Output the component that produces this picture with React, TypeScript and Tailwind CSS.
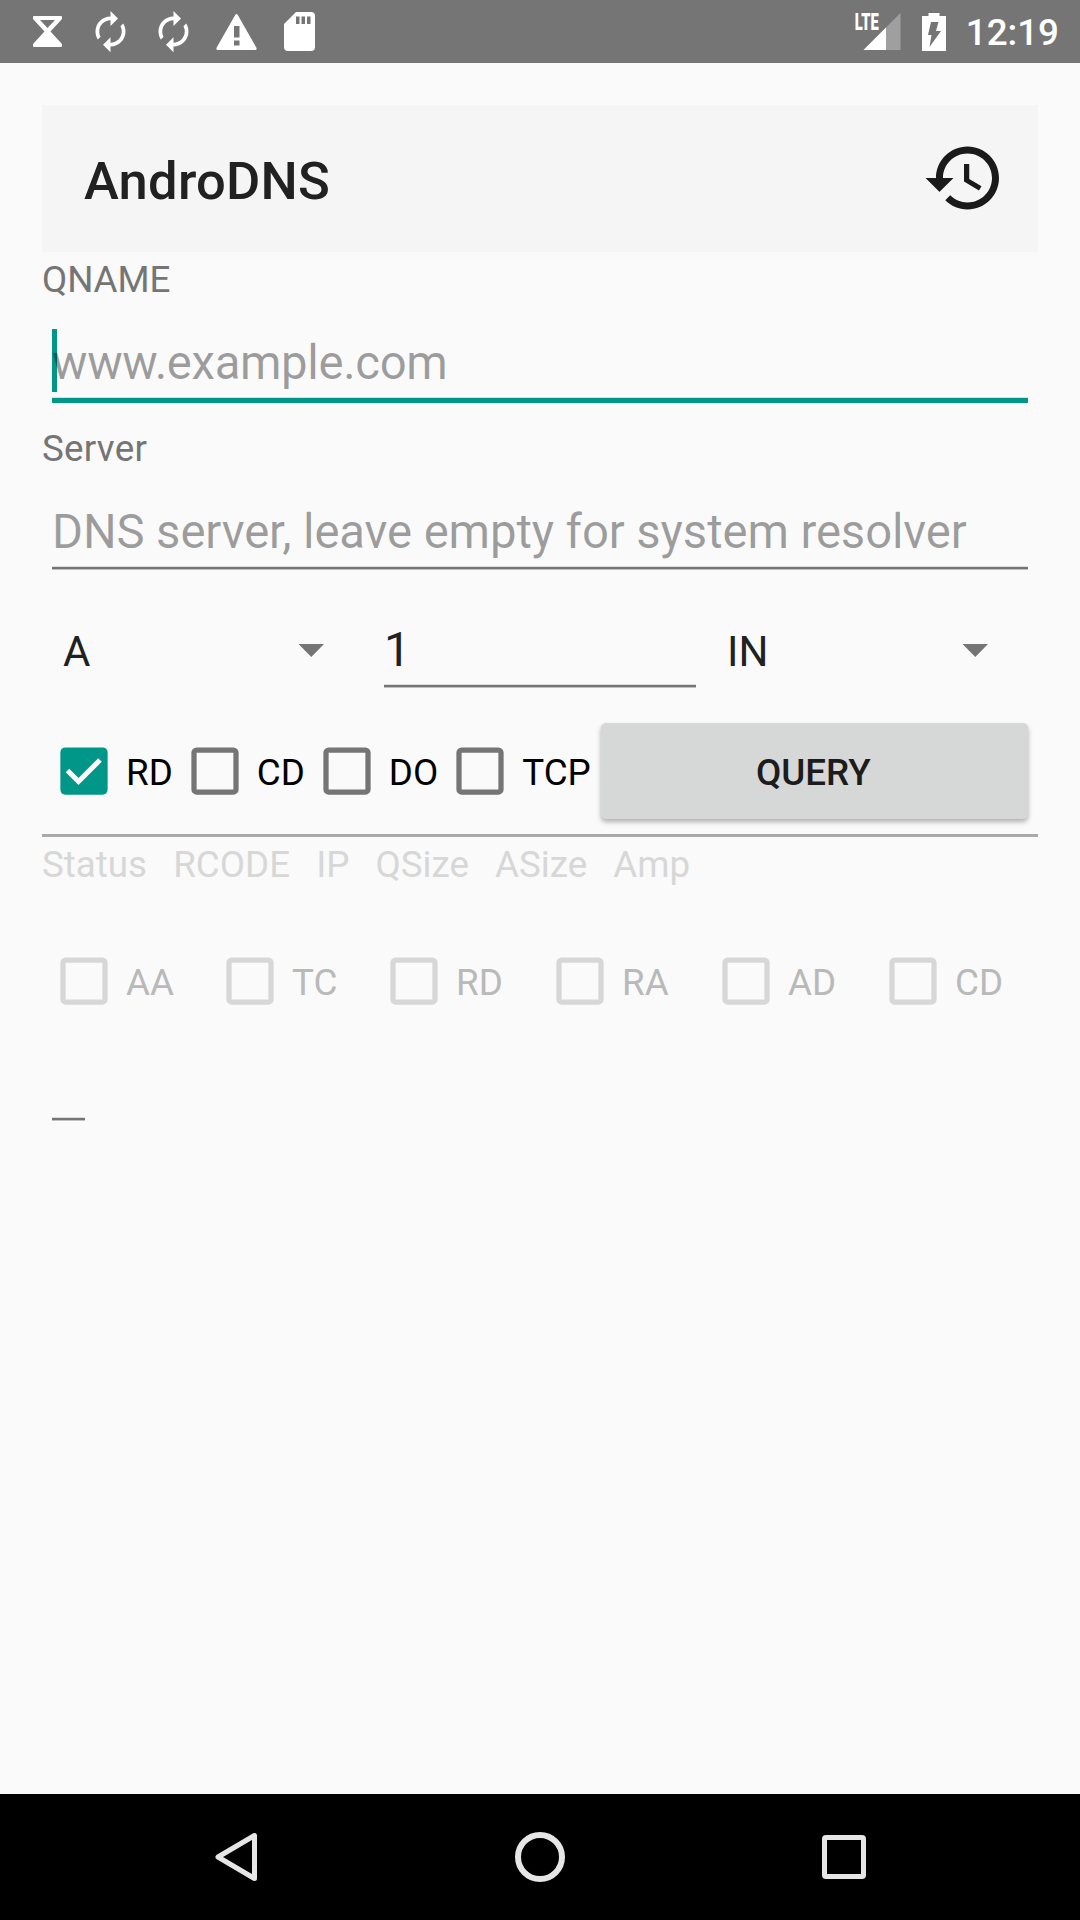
import React from "react";

const AUTORENEW =
  "M12 6v3l4-4-4-4v3c-4.420 0-8 3.580-8 8 0 1.570.46 3.030 1.240 4.260L6.700 14.800c-.45-.83-.7-1.790-.7-2.800 0-3.310 2.690-6 6-6zm6.760 1.740L17.300 9.200c.44.84.7 1.790.7 2.800 0 3.310-2.690 6-6 6v-3l-4 4 4 4v-3c4.420 0 8-3.580 8-8 0-1.570-.46-3.030-1.240-4.260z";

function Slot({ children }: { children: React.ReactNode }) {
  return <div className="flex h-[63px] w-[63px] items-center justify-center">{children}</div>;
}

function StatusBar() {
  return (
    <header className="flex h-[63px] items-center justify-between bg-[#757575] text-white">
      <div className="flex pl-4">
        <Slot>
          <svg className="h-[31px] w-[29px]" viewBox="0 0 29 31" fill="currentColor">
            <path
              fillRule="evenodd"
              d="M1 0h27q1 0 1 1v2L17.500 15.500 29 28v2q0 1-1 1H1q-1 0-1-1v-2l11.500-12.500L0 3V1q0-1 1-1zM7 4l7.500 8L22 4z"
            />
          </svg>
        </Slot>
        {[0, 1].map((i) => (
          <Slot key={i}>
            <svg className="h-[45px] w-[45px]" viewBox="0 0 24 24" fill="currentColor">
              <path d={AUTORENEW} />
            </svg>
          </Slot>
        ))}
        <Slot>
          <svg className="h-[36px] w-[41px]" viewBox="0 0 41 36" fill="currentColor">
            <path
              fillRule="evenodd"
              d="M19.200 1q1.300-2 2.600 0L40.300 33.500q1 2.500-1 2.500H1.700q-2 0-1-2.500zM18 12v11.500h5.500V12zM18 26.500v5h5.500v-5z"
            />
          </svg>
        </Slot>
        <Slot>
          <svg className="h-[39px] w-[31px]" viewBox="0 0 31 39" fill="currentColor">
            <path
              fillRule="evenodd"
              d="M12 0h15q4 0 4 4v31q0 4-4 4H4q-4 0-4-4V12zM12 4.500v7.500h3.500V4.500zM17.500 4.500v7.500H21V4.500zM23 4.500v7.500h3.500V4.500z"
            />
          </svg>
        </Slot>
      </div>
      <div className="flex items-center pr-[21px]">
        <svg className="mr-[21px] h-[45px] w-[47px] overflow-visible" viewBox="0 -3 47 45" fill="#fff">
          <path d="M46.500 1v37H9.500z" fill="#9f9f9f" />
          <path d="M32 15.500V38H9.500z" />
          <text
            x="0.7"
            y="17.500"
            fontFamily="Roboto"
            fontWeight="900"
            fontSize="23"
            textLength="24"
            lengthAdjust="spacingAndGlyphs"
          >
            LTE
          </text>
        </svg>
        <svg className="mr-5 h-[38px] w-[24px]" viewBox="0 0 24 38" fill="#fff">
          <path d="M6.500 0h11v3H24v35H0V3h6.500z" />
          <path d="M9 9h7.500l-2.500 9h5L7.500 34l2-12H6z" fill="#757575" />
        </svg>
        <span className="pt-[2px] text-[36.75px] font-medium leading-[55px]">12:19</span>
      </div>
    </header>
  );
}

function Underline() {
  return <div className="mt-[5px] h-1 border-y border-t-[#dcdcdc] border-b-[#c0c0c0] bg-[#757575]" />;
}

function Field({ label, hint, focused }: { label: string; hint: string; focused?: boolean }) {
  return (
    <div>
      <div
        className={
          focused
            ? "h-[55px] text-[36.75px] leading-[55px] tracking-[-0.1px] text-[#757575]"
            : "h-[55px] text-[36.75px] leading-[55px] tracking-[0.25px] text-[#757575]"
        }
      >
        {label}
      </div>
      <div className="relative mx-[10px] pt-[27px]">
        {focused && <div className="absolute left-0 top-[22px] h-[63px] w-[5px] bg-[#009688]" />}
        <div
          className={
            focused
              ? "relative h-[58px] whitespace-nowrap text-[47.25px] leading-[58px] tracking-[-0.33px] text-black/38"
              : "relative h-[58px] whitespace-nowrap text-[47.25px] leading-[58px] tracking-[-0.1px] text-black/38"
          }
        >
          {hint}
        </div>
        {focused ? (
          <div className="mt-[5px] h-[6px] border-t border-[#c9e6e3] bg-[#009688]" />
        ) : (
          <Underline />
        )}
      </div>
    </div>
  );
}

function Spinner({ value }: { value: string }) {
  return (
    <div className="flex h-[59px] items-center justify-between pl-[21px] pr-[49.700px]">
      <span className="pt-[3px] text-[42px] leading-[58px] text-[#212121]">{value}</span>
      <svg className="h-[13px] w-[26px]" viewBox="0 0 26 13">
        <path d="M0.500 0h25.500L13.300 13z" fill="#757575" />
      </svg>
    </div>
  );
}

function Check({ label, checked, disabled }: { label: string; checked?: boolean; disabled?: boolean }) {
  return (
    <div className="flex h-12 items-center">
      <div className="flex w-[84px] justify-center">
        <svg className="h-12 w-12" viewBox="0 0 48 48" fill="none">
          {checked ? (
            <>
              <rect x="0.375" y="0.375" width="47.250" height="47.250" rx="5" fill="#009688" />
              <path d="M7.500 23.500l11 11L40 13" stroke="#fafafa" strokeWidth="5" />
            </>
          ) : (
            <rect
              x="3"
              y="3"
              width="42"
              height="42"
              rx="2.600"
              stroke={disabled ? "#d7d7d7" : "#757575"}
              strokeWidth="5.250"
            />
          )}
        </svg>
      </div>
      <span
        className={
          disabled
            ? "pt-1 text-[36.75px] leading-[54px] text-[#b9b9b9]"
            : "pt-1 text-[36.75px] leading-[54px] text-black"
        }
      >
        {label}
      </span>
    </div>
  );
}

export default function App() {
  return (
    <div className="flex h-[1920px] w-[1080px] flex-col overflow-hidden bg-[#fafafa] font-[Roboto,sans-serif]">
      <StatusBar />
      <main className="flex flex-1 flex-col px-[42px] pt-[42px]">
        <div className="flex h-[147px] items-center justify-between bg-[#f5f5f5] pl-[42px] pr-8">
          <h1 className="pt-1 text-[52.5px] font-medium leading-[62px] tracking-[0.25px] text-[#212121]">AndroDNS</h1>
          <svg className="mb-[2px] h-[84px] w-[84px]" viewBox="0 0 24 24" fill="#1a1a1a">
            <path d="M13 3c-4.970 0-9 4.030-9 9H1l3.890 3.890.07.14L9 12H6c0-3.870 3.130-7 7-7s7 3.130 7 7-3.130 7-7 7c-1.930 0-3.680-.79-4.940-2.060l-1.420 1.420C8.270 19.990 10.510 21 13 21c4.970 0 9-4.030 9-9s-4.030-9-9-9zm-1 5v5l4.280 2.540.72-1.210-3.500-2.080V8H12z" />
          </svg>
        </div>

        <Field label="QNAME" hint="www.example.com" focused />
        <div className="h-[18px]" />
        <Field label="Server" hint="DNS server, leave empty for system resolver" />

        <div className="mt-[51px] grid grid-cols-3">
          <Spinner value="A" />
          <div className="px-[10px]">
            <div className="h-[58px] text-[47.25px] leading-[58px] text-[#212121]">1</div>
            <Underline />
          </div>
          <Spinner value="IN" />
        </div>

        <div className="mt-[35px] flex h-24 items-center">
          <Check label="RD" checked />
          <Check label="CD" />
          <Check label="DO" />
          <Check label="TCP" />
          <button className="ml-[10px] mr-[10px] h-24 flex-1 rounded-[5px] bg-[#d6d8d7] pt-[2px] pr-[2px] text-[36.75px] font-medium leading-[55px] text-[#1c1c1c] shadow-[0_3px_5px_rgba(0,0,0,0.3)]">
            QUERY
          </button>
        </div>

        <div className="mt-[15px] h-[3px] bg-[#aaaaaa]" />
        <div className="flex h-[55px] gap-[26.1px] text-[36.75px] leading-[55px] text-[#d7d7d7]">
          {["Status", "RCODE", "IP", "QSize", "ASize", "Amp"].map((t) => (
            <span key={t}>{t}</span>
          ))}
        </div>

        <div className="mt-[61px] grid h-[56px] grid-cols-[166px_164px_166px_166px_167px_auto] content-center">
          {["AA", "TC", "RD", "RA", "AD", "CD"].map((t) => (
            <Check key={t} label={t} disabled />
          ))}
        </div>

        <div className="ml-[10px] mt-[103px] w-[33px]">
          <Underline />
        </div>
      </main>

      <nav className="flex h-[126px] items-center justify-center bg-black">
        <div className="flex w-[301px] justify-start">
          <svg className="h-[50px] w-[44px]" viewBox="0 0 44 50" fill="none">
            <path d="M40.500 3.500v43L4 25z" stroke="#e6e6e6" strokeWidth="5" strokeLinejoin="round" />
          </svg>
        </div>
        <div className="h-[50px] w-[50px] rounded-full border-[6px] border-[#e6e6e6]" />
        <div className="flex w-[301px] justify-end">
          <div className="h-11 w-11 rounded-[4px] border-[5px] border-[#e6e6e6]" />
        </div>
      </nav>
    </div>
  );
}
